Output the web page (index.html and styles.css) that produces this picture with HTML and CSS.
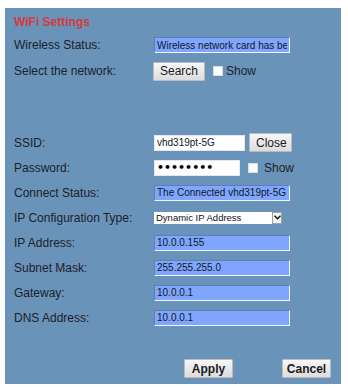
FILE: index.html
```html
<!DOCTYPE html>
<html lang="en">
<head>
<meta charset="UTF-8">
<meta name="viewport" content="width=device-width, initial-scale=1.0">
<title>WiFi Settings</title>
<link rel="stylesheet" href="styles.css">
</head>
<body>
<div class="panel">
  <h1 class="title">WiFi Settings</h1>

  <div class="row row-first">
    <span class="label">Wireless Status:</span>
    <input class="field field-info wide" type="text" value="Wireless network card has been enabled" readonly>
  </div>
  <div class="row">
    <span class="label">Select the network:</span>
    <button class="btn btn-search" type="button">Search</button>
    <label class="check check-tight"><input type="checkbox"><span>Show</span></label>
  </div>

  <div class="network-list"></div>

  <div class="row">
    <span class="label">SSID:</span>
    <input class="field field-plain ssid" type="text" value="vhd319pt-5G">
    <button class="btn btn-close" type="button">Close</button>
  </div>
  <div class="row">
    <span class="label">Password:</span>
    <input class="field field-plain pass" type="password" value="12345678">
    <label class="check"><input type="checkbox"><span>Show</span></label>
  </div>
  <div class="row">
    <span class="label">Connect Status:</span>
    <input class="field field-info wide" type="text" value="The Connected vhd319pt-5G" readonly>
  </div>
  <div class="row">
    <span class="label">IP Configuration Type:</span>
    <div class="select">
      <span class="select-text">Dynamic IP Address</span>
      <span class="select-arrow">
        <svg width="7" height="5" viewBox="0 0 7 5"><path d="M0.5 0.8 L3.5 3.8 L6.5 0.8" fill="none" stroke="#111" stroke-width="1.4"/></svg>
      </span>
    </div>
  </div>
  <div class="row">
    <span class="label">IP Address:</span>
    <input class="field field-info wide" type="text" value="10.0.0.155">
  </div>
  <div class="row">
    <span class="label">Subnet Mask:</span>
    <input class="field field-info wide" type="text" value="255.255.255.0">
  </div>
  <div class="row">
    <span class="label">Gateway:</span>
    <input class="field field-info wide" type="text" value="10.0.0.1">
  </div>
  <div class="row">
    <span class="label">DNS Address:</span>
    <input class="field field-info wide" type="text" value="10.0.0.1">
  </div>

  <div class="actions">
    <button class="btn btn-main" type="button">Apply</button>
    <button class="btn btn-main" type="button">Cancel</button>
  </div>
</div>
</body>
</html>
```

FILE: styles.css
```css
body {
  margin: 0;
  padding: 8px 7px 4px 5px;
  background-color: #fff;
  font-family: "Liberation Sans", Arial, sans-serif;
}
.panel {
  width: 336px;
  height: 376px;
  box-sizing: border-box;
  padding: 6px 10px 0 9px;
  background-color: #6a93ba;
  color: #1b2129;
  font-size: 12px;
}
.title {
  margin: 0 0 2px 0;
  height: 16px;
  line-height: 16px;
  font-size: 12px;
  font-weight: bold;
  color: #d8393f;
}
.row {
  display: flex;
  align-items: center;
  height: 25px;
}
.row-first,
.row-first + .row {
  height: 26px;
}
.label {
  width: 139px;
  flex: none;
}
.network-list {
  height: 46px;
}
.field {
  box-sizing: border-box;
  height: 16px;
  margin: 0 0 0 1px;
  padding: 0 2px;
  font-family: "Liberation Sans", Arial, sans-serif;
  font-size: 10px;
  color: #101828;
  outline: none;
}
.field-info {
  background-color: #7fa6fc;
  border: 1px solid #f2f5ff;
  border-top-color: #5c7fb6;
  border-left-color: #5c7fb6;
}
.field-plain {
  background-color: #fff;
  border: 1px solid #e4e8ee;
}
.wide {
  width: 136px;
}
.ssid {
  width: 91px;
}
.pass {
  width: 86px;
  font-family: "DejaVu Sans", sans-serif;
  font-size: 11px;
  font-weight: bold;
  letter-spacing: 0;
  color: #000;
}
.btn {
  box-sizing: border-box;
  height: 19px;
  padding: 0 6px;
  border: 1px solid #b9bdc2;
  border-radius: 1px;
  background: linear-gradient(#f7f7f7, #dcdcdc);
  font-family: "Liberation Sans", Arial, sans-serif;
  font-size: 12px;
  color: #1a1a1a;
  cursor: pointer;
}
.btn-search {
  width: 52px;
}
.btn-close {
  width: 43px;
  margin-left: 4px;
}
.check {
  display: flex;
  align-items: center;
  margin-left: 7px;
}
.check input {
  width: 10px;
  height: 10px;
  margin: 0 6px 0 1px;
  appearance: none;
  background-color: #fff;
  border: 1px solid #d9dee4;
}
.check-tight input {
  margin-right: 3px;
}
.select {
  display: flex;
  box-sizing: border-box;
  width: 128px;
  height: 12px;
  margin-left: 1px;
  background-color: #fff;
  font-size: 9.5px;
  line-height: 12px;
  color: #111;
}
.select-text {
  flex: 1;
  padding-left: 2px;
}
.select-arrow {
  display: flex;
  align-items: center;
  justify-content: center;
  width: 10px;
  border: 1px solid #9aa3ad;
  box-sizing: border-box;
  background-color: #f4f4f4;
}
.actions {
  display: flex;
  justify-content: flex-end;
  gap: 49px;
  margin-top: 29px;
}
.btn-main {
  width: 49px;
  height: 19px;
  font-weight: bold;
  padding: 0;
}
```
